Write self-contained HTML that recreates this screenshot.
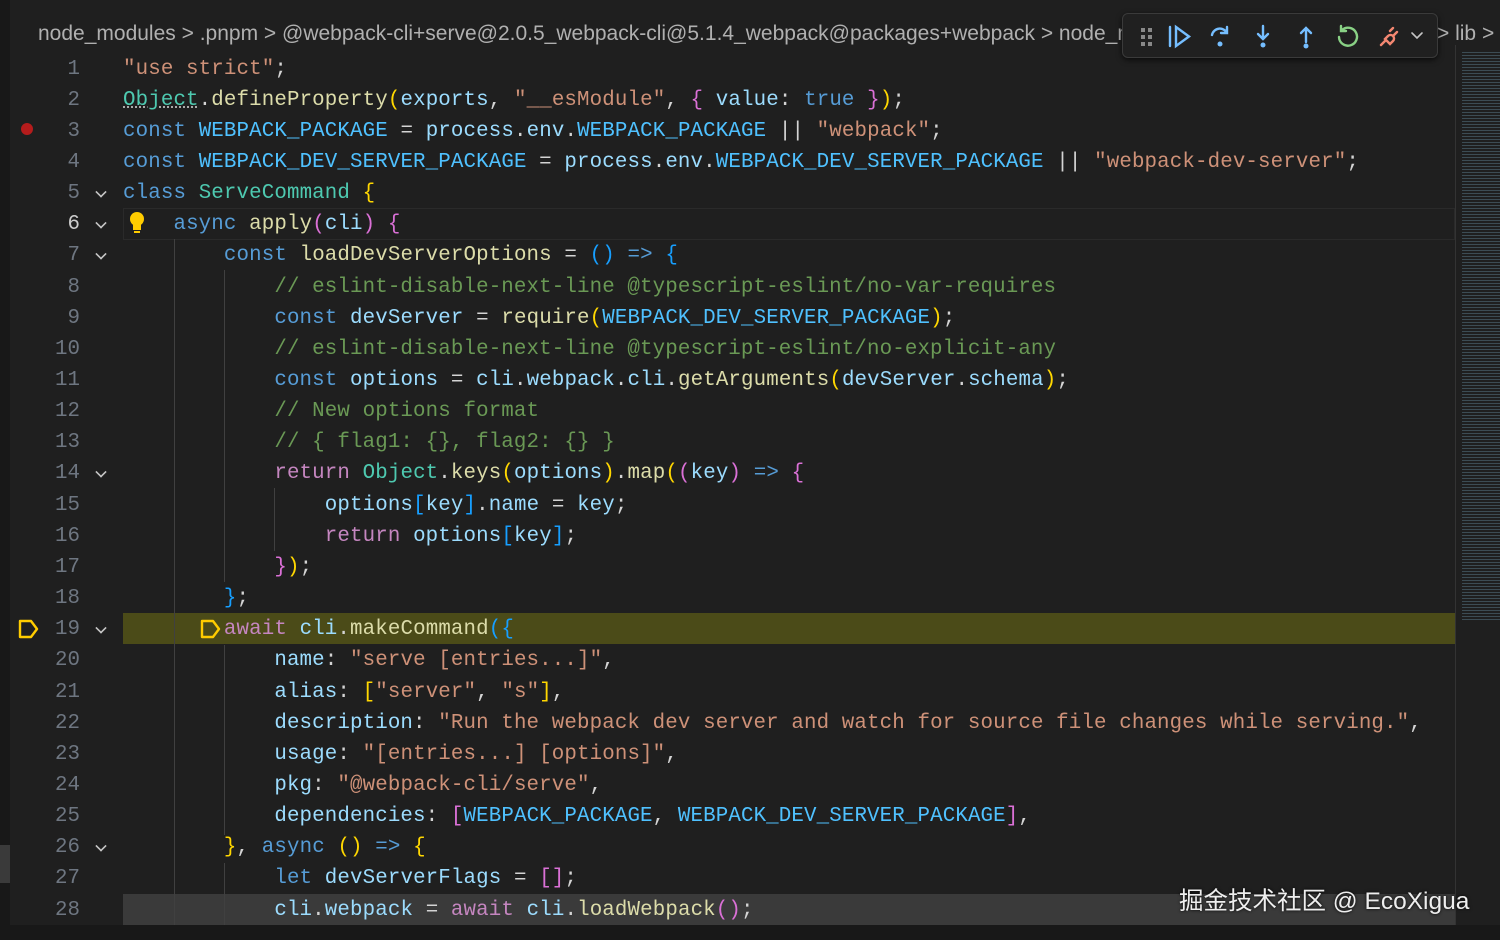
<!DOCTYPE html>
<html><head><meta charset="utf-8"><style>
*{margin:0;padding:0;box-sizing:border-box}
body{width:1500px;height:940px;background:#1f1f1f;overflow:hidden;position:relative;font-family:"Liberation Mono",monospace}
.bc{position:absolute;left:38px;top:22px;font:21px "Liberation Sans",sans-serif;color:#b0b0b0;white-space:nowrap}
.ln{position:absolute;left:0;width:1455px;height:31px;font-size:20.8px;line-height:31px;white-space:pre}
.num{position:absolute;left:30px;width:50px;text-align:right;color:#6e7681}
.code{position:absolute;left:123px;color:#d4d4d4;letter-spacing:0.13px}
.fold{position:absolute;left:96px;top:9px;width:10px;height:10px;border-right:2px solid #c5c5c5;border-bottom:2px solid #c5c5c5;transform:rotate(45deg) scale(.8)}
.k{color:#569cd6}.v{color:#9cdcfe}.c{color:#4fc1ff}.s{color:#ce9178}.cm{color:#6a9955}.f{color:#dcdcaa}.t{color:#4ec9b0}.p{color:#c586c0}
.b1{color:#ffd700}.b2{color:#da70d6}.b3{color:#179fff}
.guide{position:absolute;width:1px;background:#404040}
</style></head><body>
<div style="position:absolute;left:0;top:0;width:10px;height:940px;background:#181818"></div>
<div style="position:absolute;left:0;top:845px;width:10px;height:38px;background:#3a3a3a"></div>
<div class="bc" style="width:1084px;overflow:hidden">node_modules &gt; .pnpm &gt; @webpack-cli+serve@2.0.5_webpack-cli@5.1.4_webpack@packages+webpack &gt; node_modules</div>
<div class="bc" style="left:1437px">&gt; lib &gt;</div>
<div style="position:absolute;left:1122px;top:13px;width:316px;height:45px;background:#202020;border:1px solid #3a3a3a;border-radius:6px;box-shadow:0 2px 6px #000a">
<svg width="316" height="45" viewBox="0 0 316 45" fill="none" stroke-width="2.4" stroke-linecap="round">
<g fill="#888"><rect x="18" y="14" width="4" height="4"/><rect x="25" y="14" width="4" height="4"/><rect x="18" y="21" width="4" height="4"/><rect x="25" y="21" width="4" height="4"/><rect x="18" y="28" width="4" height="4"/><rect x="25" y="28" width="4" height="4"/></g>
<path d="M47 13v19M53 13l13 9.5-13 9.5z" stroke="#75beff"/>
<path d="M89 21a8 8 0 0 1 15-2M104 13v6h-6" stroke="#75beff"/><circle cx="97" cy="30" r="2.5" fill="#75beff"/>
<path d="M140 12v13M135 20l5 5 5-5" stroke="#75beff"/><circle cx="140" cy="31" r="2.5" fill="#75beff"/>
<path d="M183 28v-14M178 19l5-5 5 5" stroke="#75beff"/><circle cx="183" cy="32" r="2.5" fill="#75beff"/>
<path d="M219 16a9 9 0 1 1-3 7M218 12v5h5" stroke="#89d185"/>
<path d="M258 31l4-4M265 22l-3 3 5 5 3-3a3.5 3.5 0 0 0-5-5zM270 14l-3 3M274 18l-3 3" stroke="#f48771"/>
<path d="M289 19l5 5 5-5" stroke="#c5c5c5" stroke-width="1.6"/>
</svg></div>
<div style="position:absolute;left:1455px;top:45px;width:1px;height:880px;background:#333"></div>
<div style="position:absolute;left:1462px;top:50px;width:38px;height:570px;opacity:.5;background:repeating-linear-gradient(#1f1f1f 0 2px,#5a7a8a 2px 3px)"></div>
<div style="position:absolute;left:123px;top:613px;width:1332px;height:31px;background:#4b4b18"></div>
<div style="position:absolute;left:123px;top:208px;width:1332px;height:32px;border:1px solid #2a2a2a"></div>
<div style="position:absolute;left:123px;top:894px;width:1332px;height:31px;background:#3a3a3a"></div>
<div style="position:absolute;left:0;top:925px;width:1500px;height:15px;background:#181818"></div>
<div class="guide" style="left:174px;top:239px;height:686px"></div>
<div class="guide" style="left:224px;top:270px;height:312px"></div>
<div class="guide" style="left:224px;top:645px;height:190px"></div>
<div class="guide" style="left:224px;top:863px;height:62px"></div>
<div class="guide" style="left:274px;top:488px;height:63px"></div>
<div style="position:absolute;left:21px;top:123px;width:12px;height:12px;border-radius:50%;background:#b51c1c"></div>
<svg style="position:absolute;left:18px;top:619px" width="22" height="20"><path d="M2 2h11l6 8-6 8H2z" fill="none" stroke="#ffcc00" stroke-width="2.4" stroke-linejoin="round"/></svg>
<svg style="position:absolute;left:200px;top:619px" width="22" height="20"><path d="M2 2h11l6 8-6 8H2z" fill="none" stroke="#ffcc00" stroke-width="2.4" stroke-linejoin="round"/></svg>
<svg style="position:absolute;left:128px;top:210px" width="20" height="26"><circle cx="9" cy="9" r="7" fill="#ffcc00"/><rect x="5" y="14" width="8" height="6" fill="#ffcc00"/><rect x="6" y="21" width="6" height="2" fill="#ffcc00"/></svg>
<div id="lines"></div>
<script>
const L=[
['','<span class="s">"use strict"</span>;'],
['','<span class="t" style="text-decoration:underline dotted #aaa">Object</span>.<span class="f">defineProperty</span><span class="b1">(</span><span class="v">exports</span>, <span class="s">"__esModule"</span>, <span class="b2">{</span> <span class="v">value</span>: <span class="k">true</span> <span class="b2">}</span><span class="b1">)</span>;'],
['','<span class="k">const</span> <span class="c">WEBPACK_PACKAGE</span> = <span class="v">process</span>.<span class="v">env</span>.<span class="c">WEBPACK_PACKAGE</span> || <span class="s">"webpack"</span>;'],
['','<span class="k">const</span> <span class="c">WEBPACK_DEV_SERVER_PACKAGE</span> = <span class="v">process</span>.<span class="v">env</span>.<span class="c">WEBPACK_DEV_SERVER_PACKAGE</span> || <span class="s">"webpack-dev-server"</span>;'],
['f','<span class="k">class</span> <span class="t">ServeCommand</span> <span class="b1">{</span>'],
['f','    <span class="k">async</span> <span class="f">apply</span><span class="b2">(</span><span class="v">cli</span><span class="b2">)</span> <span class="b2">{</span>'],
['f','        <span class="k">const</span> <span class="f">loadDevServerOptions</span> = <span class="b3">()</span> <span class="k">=&gt;</span> <span class="b3">{</span>'],
['','            <span class="cm">// eslint-disable-next-line @typescript-eslint/no-var-requires</span>'],
['','            <span class="k">const</span> <span class="v">devServer</span> = <span class="f">require</span><span class="b1">(</span><span class="c">WEBPACK_DEV_SERVER_PACKAGE</span><span class="b1">)</span>;'],
['','            <span class="cm">// eslint-disable-next-line @typescript-eslint/no-explicit-any</span>'],
['','            <span class="k">const</span> <span class="v">options</span> = <span class="v">cli</span>.<span class="v">webpack</span>.<span class="v">cli</span>.<span class="f">getArguments</span><span class="b1">(</span><span class="v">devServer</span>.<span class="v">schema</span><span class="b1">)</span>;'],
['','            <span class="cm">// New options format</span>'],
['','            <span class="cm">// { flag1: {}, flag2: {} }</span>'],
['f','            <span class="p">return</span> <span class="t">Object</span>.<span class="f">keys</span><span class="b1">(</span><span class="v">options</span><span class="b1">)</span>.<span class="f">map</span><span class="b1">(</span><span class="b2">(</span><span class="v">key</span><span class="b2">)</span> <span class="k">=&gt;</span> <span class="b2">{</span>'],
['','                <span class="v">options</span><span class="b3">[</span><span class="v">key</span><span class="b3">]</span>.<span class="v">name</span> = <span class="v">key</span>;'],
['','                <span class="p">return</span> <span class="v">options</span><span class="b3">[</span><span class="v">key</span><span class="b3">]</span>;'],
['','            <span class="b2">}</span><span class="b1">)</span>;'],
['','        <span class="b3">}</span>;'],
['f','        <span class="p">await</span> <span class="v">cli</span>.<span class="f">makeCommand</span><span class="b3">({</span>'],
['','            <span class="v">name</span>: <span class="s">"serve [entries...]"</span>,'],
['','            <span class="v">alias</span>: <span class="b1">[</span><span class="s">"server"</span>, <span class="s">"s"</span><span class="b1">]</span>,'],
['','            <span class="v">description</span>: <span class="s">"Run the webpack dev server and watch for source file changes while serving."</span>,'],
['','            <span class="v">usage</span>: <span class="s">"[entries...] [options]"</span>,'],
['','            <span class="v">pkg</span>: <span class="s">"@webpack-cli/serve"</span>,'],
['','            <span class="v">dependencies</span>: <span class="b2">[</span><span class="c">WEBPACK_PACKAGE</span>, <span class="c">WEBPACK_DEV_SERVER_PACKAGE</span><span class="b2">]</span>,'],
['f','        <span class="b1">}</span>, <span class="k">async</span> <span class="b1">()</span> <span class="k">=&gt;</span> <span class="b1">{</span>'],
['','            <span class="k">let</span> <span class="v">devServerFlags</span> = <span class="b2">[]</span>;'],
['','            <span class="v">cli</span>.<span class="v">webpack</span> = <span class="p">await</span> <span class="v">cli</span>.<span class="f">loadWebpack</span><span class="b2">()</span>;']
];
let h='';
L.forEach((l,i)=>{
 const top=53.5+31.15*i;
 const cur=(i==5);
 h+=`<div class="ln" style="top:${top}px"><span class="num" style="${cur?'color:#ccc':''}">${i+1}</span>${l[0]?'<span class="fold"></span>':''}<span class="code">${l[1]}</span></div>`;
});
document.getElementById('lines').innerHTML=h;
</script>
<div style="position:absolute;left:1179px;top:882px;font:24.5px 'Liberation Sans','Noto Sans CJK SC',sans-serif;color:#eee;text-shadow:0 0 3px #000">掘金技术社区 @ EcoXigua</div>
</body></html>
